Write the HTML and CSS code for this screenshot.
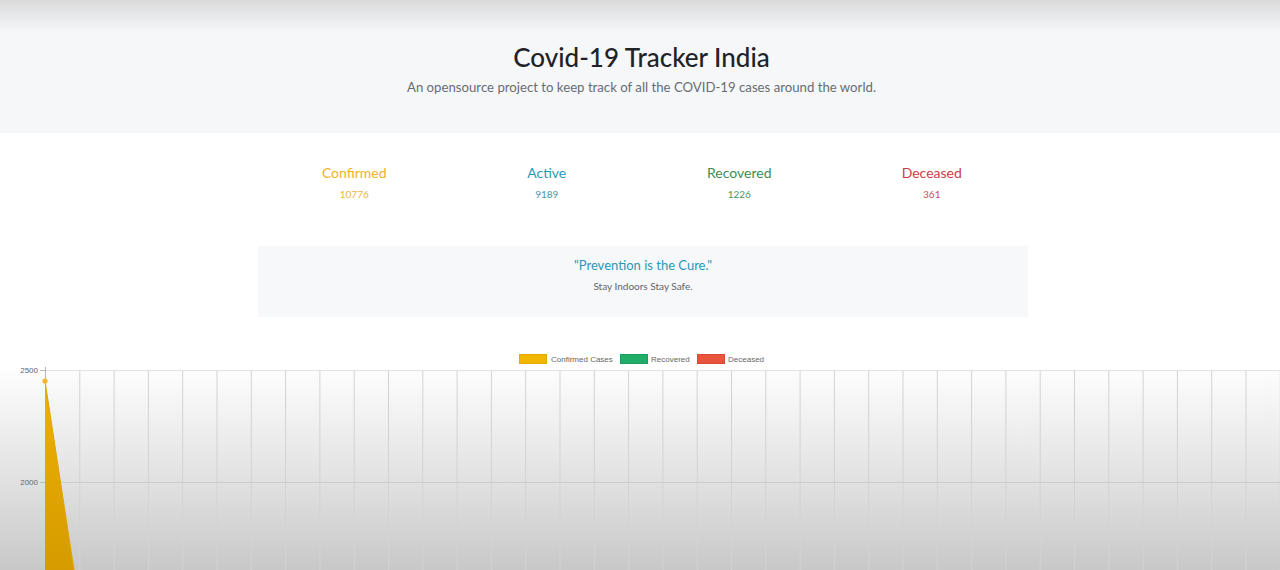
FILE: index.html
```html
<!DOCTYPE html>
<html lang="en">
<head>
<meta charset="utf-8">
<title>Covid-19 Tracker India</title>
<link rel="stylesheet" href="styles.css">
</head>
<body>
<header class="hero">
  <h1 class="hero-title">Covid-19 Tracker India</h1>
  <p class="hero-sub">An opensource project to keep track of all the COVID-19 cases around the world.</p>
</header>
<main class="container">
  <section class="stats">
    <div class="stat">
      <div class="stat-label confirmed">Confirmed</div>
      <div class="stat-num confirmed">10776</div>
    </div>
    <div class="stat">
      <div class="stat-label active">Active</div>
      <div class="stat-num active">9189</div>
    </div>
    <div class="stat">
      <div class="stat-label recovered">Recovered</div>
      <div class="stat-num recovered">1226</div>
    </div>
    <div class="stat">
      <div class="stat-label deceased">Deceased</div>
      <div class="stat-num deceased">361</div>
    </div>
  </section>
  <section class="quote">
    <div class="quote-main">"Prevention is the Cure."</div>
    <div class="quote-sub">Stay Indoors Stay Safe.</div>
  </section>
</main>
<section class="chart">
  <svg class="chart-svg" width="1280" height="240" viewBox="0 0 1280 240" xmlns="http://www.w3.org/2000/svg">
    <defs>
      <linearGradient id="bg" x1="0" y1="0" x2="0" y2="1">
        <stop offset="0" stop-color="#fdfdfd"/>
        <stop offset="0.5" stop-color="#e2e2e2"/>
        <stop offset="1" stop-color="#c4c4c4"/>
      </linearGradient>
      <linearGradient id="area" x1="0" y1="0" x2="0" y2="1">
        <stop offset="0" stop-color="#eeb000"/>
        <stop offset="1" stop-color="#d39a00"/>
      </linearGradient>
      <pattern id="grid" x="45" y="0" width="34.3" height="240" patternUnits="userSpaceOnUse">
        <line x1="0.5" y1="0" x2="0.5" y2="240" stroke="#d2d2d2" stroke-width="1"/>
      </pattern>
    </defs>
    <rect x="0" y="25" width="1280" height="215" fill="url(#bg)"/>
    <rect x="45" y="25" width="1235" height="215" fill="url(#grid)"/>
    <line x1="45" y1="25.5" x2="1280" y2="25.5" stroke="#e2e2e2"/>
    <line x1="45" y1="137.5" x2="1280" y2="137.5" stroke="#cdcdcd"/>
    <line x1="40" y1="25.5" x2="45" y2="25.5" stroke="#bbb"/>
    <line x1="40" y1="137.5" x2="45" y2="137.5" stroke="#bbb"/>
    <line x1="45.5" y1="22" x2="45.5" y2="240" stroke="#b5b5b5"/>
    <text class="axis" x="38" y="28" text-anchor="end">2500</text>
    <text class="axis" x="38" y="140" text-anchor="end">2000</text>
    <polygon points="45,36 76.3,240 45,240" fill="url(#area)"/>
    <line x1="45" y1="36" x2="76.3" y2="240" stroke="#e0a400" stroke-width="1"/>
    <circle cx="45" cy="36" r="2.6" fill="#f2b62a"/>
    <g class="legend">
      <rect x="519.5" y="9.5" width="27" height="9" fill="#f1b600" stroke="#e5aa00"/>
      <text x="551" y="16.5">Confirmed Cases</text>
      <rect x="620.5" y="9.5" width="27" height="9" fill="#22ac6a" stroke="#1e9c5e"/>
      <text x="651" y="16.5">Recovered</text>
      <rect x="697.5" y="9.5" width="27" height="9" fill="#e8543c" stroke="#d84a33"/>
      <text x="728" y="16.5">Deceased</text>
    </g>
  </svg>
</section>
</body>
</html>
```

FILE: styles.css
```css
html, body {
  margin: 0;
  padding: 0;
  background: #ffffff;
  font-family: Lato, "Noto Sans", sans-serif;
  overflow: hidden;
}

.hero {
  position: relative;
  height: 133px;
  box-sizing: border-box;
  padding-top: 40px;
  background: #f6f7f9;
  text-align: center;
}

.hero::before {
  content: "";
  position: absolute;
  left: 0;
  top: 0;
  right: 0;
  height: 32px;
  background: linear-gradient(to bottom, rgba(195,195,195,0.55), rgba(246,247,249,0));
  pointer-events: none;
}

.hero-title {
  margin: 0 0 0 3px;
  font-size: 26px;
  line-height: 34px;
  font-weight: 500;
  color: #1f2327;
}

.hero-sub {
  margin: 4px 0 0 3px;
  font-size: 13.2px;
  line-height: 18px;
  color: #676d74;
}

.container {
  width: 770px;
  margin: 0 0 0 calc(50% - 382px);
}

.stats {
  display: grid;
  grid-template-columns: repeat(4, 1fr);
  padding-top: 30px;
  text-align: center;
}

.stat-label {
  font-size: 14px;
  line-height: 20px;
}

.stat-num {
  margin-top: 3px;
  font-size: 10px;
  line-height: 16px;
}

.confirmed { color: #f2b21f; }
.active { color: #2a98b8; }
.recovered { color: #3c8f4e; }
.deceased { color: #cf3b44; }

.stat-num.confirmed { color: #f0b440; }
.stat-num.active { color: #4d95ae; }
.stat-num.recovered { color: #4a9462; }
.stat-num.deceased { color: #c8505a; }

.quote {
  margin-top: 44px;
  height: 71px;
  box-sizing: border-box;
  padding-top: 9px;
  background: #f7f8fa;
  text-align: center;
}

.quote-main {
  font-size: 13px;
  line-height: 20px;
  color: #2a97b5;
}

.quote-sub {
  margin-top: 3px;
  font-size: 10px;
  line-height: 16px;
  color: #5f656b;
}

.chart {
  margin-top: 28px;
  width: 1280px;
}

.chart-svg {
  display: block;
}

.axis {
  font-family: "Liberation Sans", Arial, sans-serif;
  font-size: 8px;
  fill: #666;
}

.legend text {
  font-family: "Liberation Sans", Arial, sans-serif;
  font-size: 8px;
  fill: #666;
}
```
